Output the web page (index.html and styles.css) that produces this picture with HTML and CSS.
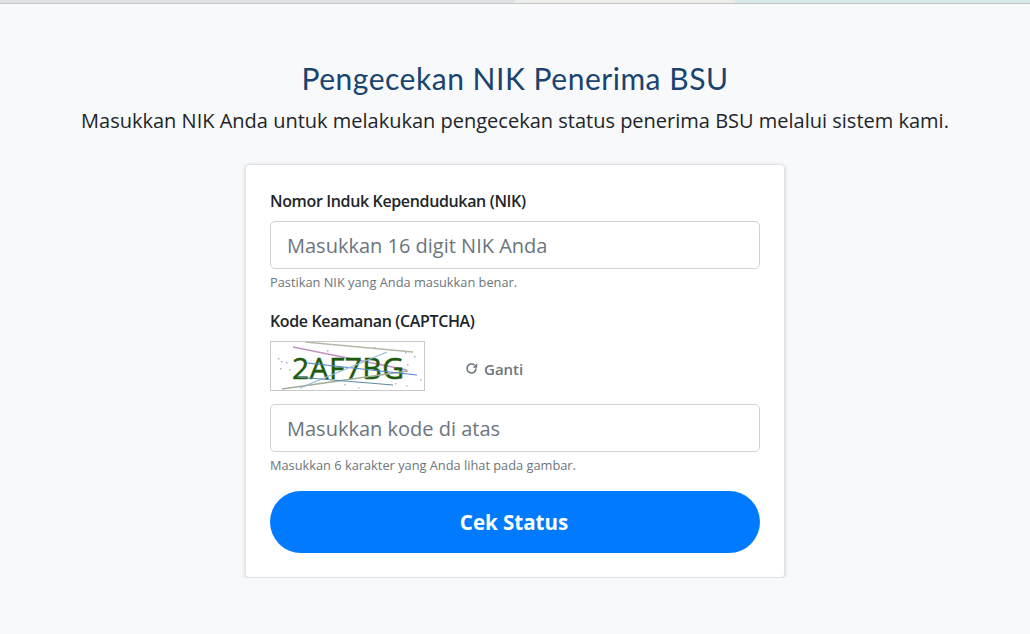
FILE: index.html
```html
<!DOCTYPE html>
<html lang="id">
<head>
    <meta charset="UTF-8">
    <meta name="viewport" content="width=device-width, initial-scale=1.0">
    <title>Pengecekan NIK Penerima BSU</title>
    <link rel="stylesheet" href="styles.css">
</head>
<body>
    <div class="top-strip">
        <div class="strip-a"></div>
        <div class="strip-b"></div>
        <div class="strip-c"></div>
    </div>
    <main class="page">
        <h1 class="title">Pengecekan NIK Penerima BSU</h1>
        <p class="lead">Masukkan NIK Anda untuk melakukan pengecekan status penerima BSU melalui sistem kami.</p>
        <form class="card">
            <div class="field">
                <label class="field-label" for="nik">Nomor Induk Kependudukan (NIK)</label>
                <input class="field-input" id="nik" type="text" placeholder="Masukkan 16 digit NIK Anda">
                <small class="field-help">Pastikan NIK yang Anda masukkan benar.</small>
            </div>
            <div class="field field-last">
                <label class="field-label" for="captcha">Kode Keamanan (CAPTCHA)</label>
                <div class="captcha-row">
                    <svg class="captcha-img" viewBox="0 0 153 48" width="153" height="48">
                        <rect width="153" height="48" fill="#ffffff"/>
                        <line x1="34" y1="0" x2="142" y2="10" stroke="#b4b8a4" stroke-width="1.4"/>
                        <line x1="22" y1="5" x2="136" y2="28" stroke="#c090c4" stroke-width="1.4"/>
                        <text class="captcha-text" x="21" y="37">2AF7BG</text>
                        <line x1="11" y1="47" x2="137" y2="29" stroke="#a4ac98" stroke-width="1.4"/>
                        <line x1="36" y1="21" x2="146" y2="33" stroke="#4f84c4" stroke-width="1.2"/>
                        <line x1="29" y1="46" x2="116" y2="10" stroke="#90bedc" stroke-width="1.2"/>
                        <line x1="26" y1="35" x2="122" y2="43" stroke="#6089a4" stroke-width="1.2"/>
                        <g fill="#b7a8d8">
                            <rect x="7" y="16" width="1.5" height="1.5"/>
                            <rect x="10" y="19" width="1.5" height="1.5"/>
                            <rect x="15" y="20" width="1.5" height="1.5"/>
                            <rect x="18" y="27" width="1.5" height="1.5"/>
                            <rect x="9" y="26" width="1.5" height="1.5"/>
                            <rect x="56" y="8" width="1.5" height="1.5"/>
                            <rect x="66" y="14" width="1.5" height="1.5"/>
                            <rect x="103" y="5" width="1.5" height="1.5"/>
                            <rect x="134" y="10" width="1.5" height="1.5"/>
                            <rect x="143" y="14" width="1.5" height="1.5"/>
                            <rect x="136" y="22" width="1.5" height="1.5"/>
                        </g>
                        <g fill="#9fd0a8">
                            <rect x="149" y="37" width="1.5" height="1.5"/>
                            <rect x="87" y="45" width="1.5" height="1.5"/>
                            <rect x="73" y="42" width="1.5" height="1.5"/>
                            <rect x="135" y="43" width="1.5" height="1.5"/>
                            <rect x="124" y="41" width="1.5" height="1.5"/>
                        </g>
                    </svg>
                    <button class="refresh" type="button">
                        <svg class="refresh-icon" viewBox="0 0 16 16" width="13" height="13">
                            <path d="M13.5 8a5.5 5.5 0 1 1-1.7-4" fill="none" stroke="currentColor" stroke-width="2"/>
                            <path d="M15 1.5v5.5h-5.5z" fill="currentColor"/>
                        </svg>
                        Ganti
                    </button>
                </div>
                <input class="field-input" id="captcha" type="text" placeholder="Masukkan kode di atas">
                <small class="field-help">Masukkan 6 karakter yang Anda lihat pada gambar.</small>
            </div>
            <button class="submit" type="button">Cek Status</button>
        </form>
    </main>
</body>
</html>
```

FILE: styles.css
```css
* {
    box-sizing: border-box;
}
body {
    margin: 0;
    background: #f8f9fa;
    color: #212529;
    font-family: "Open Sans", sans-serif;
}
.top-strip {
    display: flex;
    height: 4px;
    border-bottom: 1px solid #c4c5c5;
}
.strip-a {
    width: 515px;
    background: #e0e1e3;
}
.strip-b {
    width: 220px;
    background: #ececeb;
}
.strip-c {
    flex: 1;
    background: #d9e8ea;
}
.page {
    display: flex;
    flex-direction: column;
    align-items: center;
    padding-top: 56px;
}
.title {
    margin: 0 0 10px;
    font-family: "Lato", sans-serif;
    font-size: 30px;
    font-weight: 400;
    line-height: 36px;
    letter-spacing: 0.52px;
    color: #1a4470;
}
.lead {
    margin: 0 0 28px;
    font-size: 20px;
    line-height: 30px;
}
.card {
    width: 540px;
    padding: 24px;
    background: #ffffff;
    border: 1px solid #e0e2e5;
    border-radius: 4px;
    box-shadow: 0 1px 4px rgba(0, 0, 0, 0.14);
}
.field {
    margin-bottom: 17px;
}
.field-last {
    margin-bottom: 16px;
}
.field-label {
    display: block;
    margin-bottom: 8px;
    font-size: 16px;
    font-weight: 600;
    line-height: 24px;
    letter-spacing: -0.36px;
}
.field-input {
    display: block;
    width: 100%;
    height: 48px;
    padding: 0 16px;
    font-family: inherit;
    font-size: 20px;
    background: #ffffff;
    border: 1px solid #ced4da;
    border-radius: 5px;
}
.field-input::placeholder {
    color: #6c757d;
    opacity: 1;
}
.field-help {
    display: block;
    margin-top: 4px;
    font-size: 12.8px;
    line-height: 19px;
    color: #6c757d;
}
.captcha-row {
    display: flex;
    align-items: center;
    gap: 40px;
    margin-bottom: 13px;
}
.captcha-img {
    box-sizing: content-box;
    display: block;
    border: 1px solid #c8c8c8;
}
.captcha-text {
    font-family: "Open Sans", sans-serif;
    font-size: 30px;
    fill: #1c5a0e;
    stroke: #1c5a0e;
    stroke-width: 0.5;
    letter-spacing: 0.4px;
}
.refresh {
    display: flex;
    align-items: center;
    gap: 6px;
    padding: 5px 0 0;
    border: 0;
    background: none;
    font-family: inherit;
    font-size: 15px;
    font-weight: 600;
    color: #6c757d;
}
.refresh-icon {
    display: block;
}
.submit {
    display: block;
    width: 100%;
    height: 62px;
    padding: 0 2px 0 0;
    border: 0;
    border-radius: 31px;
    background: #007bff;
    color: #ffffff;
    font-family: inherit;
    font-size: 20.5px;
    font-weight: 700;
}
```
